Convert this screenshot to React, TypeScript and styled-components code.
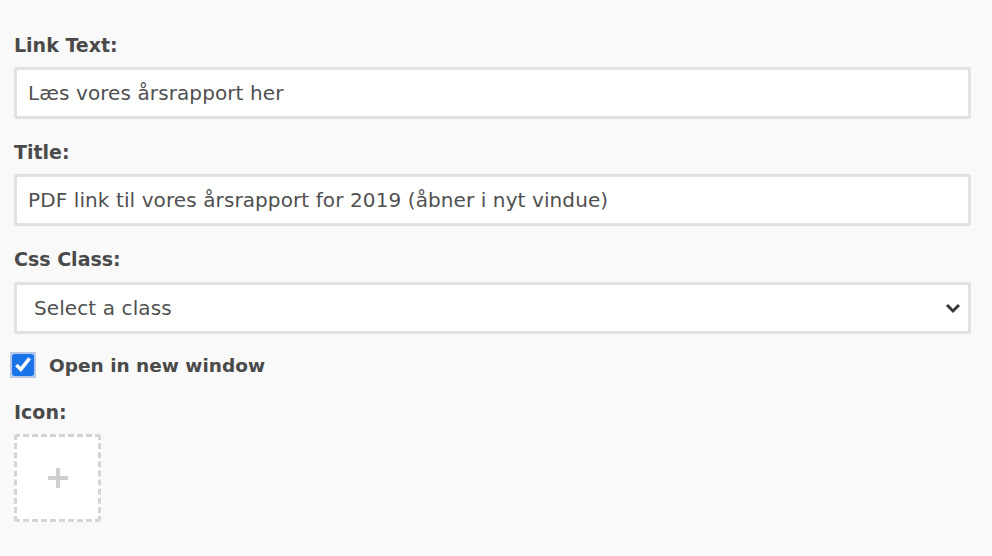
import styled, { createGlobalStyle } from "styled-components";

const GlobalStyle = createGlobalStyle`
  body {
    margin: 0;
    background: #f9f9f9;
    font-family: "DejaVu Sans", "Open Sans", sans-serif;
    color: #4a4a4a;
  }
`;

const Form = styled.div`
  display: flex;
  flex-direction: column;
  padding: 32px 21px 0 14px;
`;

const Field = styled.div`
  display: flex;
  flex-direction: column;
  margin-bottom: 20px;
`;

const Label = styled.label`
  font-size: 19px;
  font-weight: 700;
  line-height: 26px;
  color: #4a4a4a;
  margin-bottom: 9px;
`;

const TextInput = styled.input`
  box-sizing: border-box;
  height: 52px;
  width: 100%;
  padding: 0 11px;
  border: 3px solid #e2e2e2;
  border-radius: 2px;
  background: #fff;
  font-family: inherit;
  font-size: 20px;
  letter-spacing: 0.1px;
  color: #505050;
  outline: none;
`;

const SelectWrap = styled.div`
  position: relative;
  margin-top: 1px;
`;

const Select = styled.select`
  box-sizing: border-box;
  appearance: none;
  height: 52px;
  width: 100%;
  padding: 0 17px;
  border: 3px solid #e2e2e2;
  border-radius: 2px;
  background: #fff;
  font-family: inherit;
  font-size: 20px;
  letter-spacing: 0.1px;
  color: #505050;
  outline: none;
`;

const Chevron = styled.svg`
  position: absolute;
  right: 10px;
  top: 50%;
  transform: translateY(-50%);
  pointer-events: none;
`;

const CheckRow = styled.label`
  display: flex;
  align-items: center;
  gap: 15px;
  margin: 0 0 23px -2px;
  font-size: 18.5px;
  font-weight: 700;
  color: #4a4a4a;
`;

const Checkbox = styled.input`
  width: 22px;
  height: 22px;
  margin: 0;
  accent-color: #1a73e8;
  outline: 2px solid #b8c8e8;
  outline-offset: 0;
`;

const IconDrop = styled.button`
  box-sizing: border-box;
  width: 87px;
  height: 88px;
  border: 3px dashed #d4d4d4;
  border-radius: 3px;
  background: #fff;
  display: flex;
  align-items: center;
  justify-content: center;
  padding: 0;
  cursor: pointer;
`;

export default function App() {
  return (
    <>
      <GlobalStyle />
      <Form>
        <Field>
          <Label>Link Text:</Label>
          <TextInput defaultValue="Læs vores årsrapport her" />
        </Field>
        <Field>
          <Label>Title:</Label>
          <TextInput defaultValue="PDF link til vores årsrapport for 2019 (åbner i nyt vindue)" />
        </Field>
        <Field>
          <Label>Css Class:</Label>
          <SelectWrap>
            <Select defaultValue="">
              <option value="">Select a class</option>
            </Select>
            <Chevron width="16" height="12" viewBox="0 0 16 12">
              <path d="M2 3l6 6 6-6" fill="none" stroke="#3a3a3a" strokeWidth="3" />
            </Chevron>
          </SelectWrap>
        </Field>
        <CheckRow>
          <Checkbox type="checkbox" defaultChecked />
          Open in new window
        </CheckRow>
        <Field>
          <Label>Icon:</Label>
          <IconDrop>
            <svg width="24" height="24" viewBox="0 0 24 24">
              <path d="M12 2v20M2 12h20" stroke="#cfcfcf" strokeWidth="4" />
            </svg>
          </IconDrop>
        </Field>
      </Form>
    </>
  );
}
